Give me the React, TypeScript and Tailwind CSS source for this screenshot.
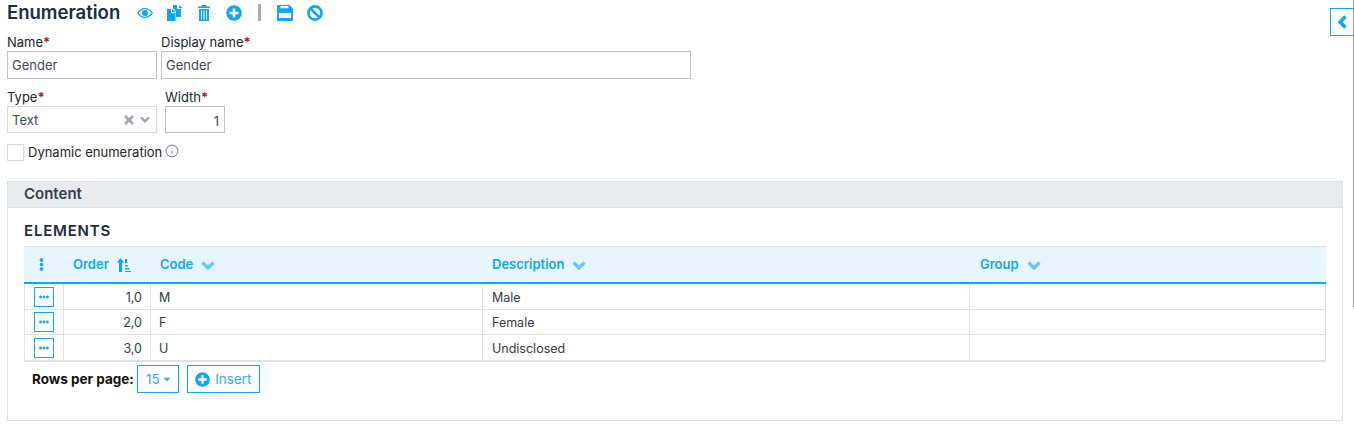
import { FaEllipsisH, FaEllipsisV, FaPlusCircle, FaCaretDown } from "react-icons/fa";
import { FiInfo } from "react-icons/fi";

const rows = [
  { order: "1,0", code: "M", description: "Male", h: "h-[26px]" },
  { order: "2,0", code: "F", description: "Female", h: "h-[25px]" },
  { order: "3,0", code: "U", description: "Undisclosed", h: "h-[26px]" },
];

const Chevron = ({ className }: { className: string }) => (
  <svg viewBox="0 0 14 9" className={className} fill="none" stroke="currentColor" strokeWidth="3.4">
    <path d="M1.500 1.500 7 7l5.500-5.500" />
  </svg>
);

const EyeIcon = () => (
  <svg viewBox="0 0 16 12" className="h-[12px] w-[16px]" fill="currentColor">
    <path d="M8 1C4.600 1 1.800 3 0 6c1.800 3 4.600 5 8 5s6.200-2 8-5c-1.800-3-4.600-5-8-5Zm0 1.200c2.600 0 4.900 1.400 6.500 3.800C12.900 8.400 10.600 9.800 8 9.800S3.100 8.400 1.500 6C3.100 3.600 5.400 2.200 8 2.200Z" />
    <path d="M8 3a3 3 0 1 0 0 6 3 3 0 0 0 0-6Z" />
  </svg>
);

const CopyIcon = () => (
  <svg viewBox="0 0 16 16" className="h-[16px] w-[16px]" fill="currentColor">
    <path d="M6 0h4v4h4v8H9V6.500L6 3.500Z" />
    <path d="M11 0l3.500 3H11Z" transform="translate(1 0)" />
    <path d="M0 4h4v4h4.500v8H0Z" />
    <path d="M5 4l3.500 3H5Z" />
  </svg>
);

const TrashIcon = () => (
  <svg viewBox="0 0 12 16" className="h-[16px] w-[12px]" fill="currentColor" fillRule="evenodd">
    <path d="M4 0h4l.7 1.500H12V3H0V1.500h3.300Z" />
    <path d="M1 4h10v12H1ZM3 5.500v9h1v-9Zm2.500 0v9h1v-9Zm2.500 0v9h1v-9Z" />
  </svg>
);

const SaveIcon = () => (
  <svg viewBox="0 0 16 16" className="h-[16px] w-[16px]" fill="currentColor" fillRule="evenodd">
    <path d="M1 0h11.500L16 3.500V15a1 1 0 0 1-1 1H1a1 1 0 0 1-1-1V1a1 1 0 0 1 1-1Zm2.500 1v2.300h8V1ZM2 8v5h12V8Z" />
  </svg>
);

const BanIcon = () => (
  <svg viewBox="0 0 16 16" className="h-[16px] w-[16px]" fill="none" stroke="currentColor" strokeWidth="2.6">
    <circle cx="8" cy="8" r="6.600" />
    <path d="M3.500 3.500l9 9" />
  </svg>
);

const SortIcon = () => (
  <svg viewBox="0 0 14 14" className="h-[14px] w-[14px]" fill="currentColor">
    <path d="M3.500 0 7 4.500H5V14H2V4.500H0Z" />
    <path d="M8 1h2.200v4H8Zm0 6h3v1.600H8Zm0 3h4.500v1.600H8Zm0 3h6v1.400H8Z" />
  </svg>
);

const Label = ({ text }: { text: string }) => (
  <div className="h-[18px] text-[13px] leading-[18px] text-[#212529]">
    {text}
    <span className="font-bold text-[#c1121f]">*</span>
  </div>
);

const HeaderCell = ({ text, className }: { text: string; className: string }) => (
  <div className={`flex items-center text-[13px] font-semibold text-[#0ea5fb] ${className}`}>
    {text}
    <Chevron className="ml-[8px] mt-[2px] h-[9px] w-[14px] text-[#6cc7fb]" />
  </div>
);

const App = () => {
  return (
    <div className="relative h-[427px] w-[1354px] overflow-hidden bg-white font-['Inter',sans-serif] text-[#212529]">
      <div className="absolute right-0 top-0 h-[307px] w-px bg-[#999]" />
      <button className="absolute right-px top-[8px] flex h-[28px] w-[23px] items-center justify-center border border-r-0 border-[#0ea5fb] bg-white text-[#0ea5fb]">
        <svg viewBox="0 0 10 14" className="h-[14px] w-[10px]" fill="none" stroke="currentColor" strokeWidth="3.4">
          <path d="M8.500 1.500 3 7l5.500 5.500" />
        </svg>
      </button>

      <div className="flex h-[25px] items-center pl-[7px]">
        <h1 className="w-[130px] text-[18.5px] font-semibold text-[#1c2b41]">Enumeration</h1>
        <div className="flex items-center text-[#0ea5fb]">
          <EyeIcon />
          <span className="ml-[14px]"><CopyIcon /></span>
          <span className="ml-[15px]"><TrashIcon /></span>
          <FaPlusCircle className="ml-[16px] w-[16px] text-[16px]" />
          <span className="ml-[16px] h-[17px] w-[3px] bg-[#a3afba]" />
          <span className="ml-[16px]"><SaveIcon /></span>
          <span className="ml-[14px]"><BanIcon /></span>
        </div>
      </div>

      <div className="mt-[8px] flex pl-[7px]">
        <div className="w-[150px]">
          <Label text="Name" />
          <input readOnly value="Gender" className="h-[28px] w-[150px] border border-[#b9c2ca] px-[4px] text-[13px] text-[#3b4a5c]" />
        </div>
        <div className="ml-[4px] w-[530px]">
          <Label text="Display name" />
          <input readOnly value="Gender" className="h-[28px] w-[530px] border border-[#b9c2ca] px-[4px] text-[13px] text-[#3b4a5c]" />
        </div>
      </div>

      <div className="mt-[9px] flex pl-[7px]">
        <div className="w-[150px]">
          <Label text="Type" />
          <div className="flex h-[27px] items-center border border-[#d5dce2] pl-[4px] pr-[6px] pt-[2px] text-[13px] text-[#3b4a5c]">
            <span className="flex-1">Text</span>
            <svg viewBox="0 0 10 10" className="mb-[2px] mr-[2px] h-[10px] w-[10px] text-[#9aa7b2]" fill="none" stroke="currentColor" strokeWidth="2.6">
              <path d="M1 1l8 8M9 1 1 9" />
            </svg>
            <Chevron className="mb-[2px] ml-[4px] h-[7px] w-[10px] text-[#9aa7b2]" />
          </div>
        </div>
        <div className="ml-[8px] w-[60px]">
          <Label text="Width" />
          <input readOnly value="1" className="h-[27px] w-[60px] border border-[#b9c2ca] pl-[4px] pr-[5px] pt-[2px] text-right text-[13px] text-[#3b4a5c]" />
        </div>
      </div>

      <div className="mt-[11px] flex h-[17px] items-center pl-[7px]">
        <span className="h-[17px] w-[17px] border border-[#d5dce2]" />
        <span className="ml-[4px] text-[13px] text-[#212529]">Dynamic enumeration</span>
        <FiInfo className="mb-[3px] ml-[3px] text-[14px] text-[#8b97a3]" />
      </div>

      <div className="ml-[7px] mt-[20px] h-[240px] w-[1336px] border border-[#dee2e6]">
        <div className="flex h-[26px] items-center border-b border-[#dee2e6] bg-[#e9ecef] pl-[16px] text-[15px] font-semibold text-[#343f4d]">
          Content
        </div>
        <div className="pl-[16px] pr-[16px]">
          <h2 className="mt-[14px] h-[17px] text-[15px] font-semibold leading-[17px] tracking-[0.8px] text-[#1c2b41]">ELEMENTS</h2>
          <div className="mt-[7px] flex h-[38px] items-center border-b-2 border-t border-b-[#0ea5fb] border-t-[#dee2e6] bg-[#e7f5fe]">
            <div className="flex w-[40px] justify-center pr-[6px] text-[13px] text-[#0ea5fb]"><FaEllipsisV /></div>
            <div className="flex w-[87px] items-center pl-[9px] text-[13px] font-semibold text-[#0ea5fb]">
              Order
              <span className="ml-[8px]"><SortIcon /></span>
            </div>
            <HeaderCell text="Code" className="w-[332px] pl-[9px]" />
            <HeaderCell text="Description" className="w-[487px] pl-[9px]" />
            <HeaderCell text="Group" className="flex-1 pl-[10px]" />
          </div>
          {rows.map((row) => (
            <div key={row.code} className={`flex border-b border-[#dee2e6] text-[12.5px] text-[#343a40] ${row.h}`}>
              <div className="flex w-[40px] items-center justify-center border-l border-r border-[#dee2e6]">
                <button className="flex h-[20px] w-[20px] items-center justify-center border border-[#0ea5fb] text-[10px] text-[#0ea5fb]">
                  <FaEllipsisH />
                </button>
              </div>
              <div className="flex w-[87px] items-center justify-end border-r border-[#dee2e6] pr-[8px] pt-[3px]">{row.order}</div>
              <div className="flex w-[332px] items-center border-r border-[#dee2e6] pl-[8px] pt-[3px]">{row.code}</div>
              <div className="flex w-[487px] items-center border-r border-[#dee2e6] pl-[9px] pt-[3px]">{row.description}</div>
              <div className="flex-1 border-r border-[#dee2e6]" />
            </div>
          ))}
          <div className="h-px bg-[#dee2e6]" />
          <div className="mt-[3px] flex items-center pl-[8px]">
            <span className="text-[13.5px] font-bold text-[#111]">Rows per page:</span>
            <button className="ml-[3px] flex h-[28px] w-[42px] items-center justify-center border border-[#0ea5fb] pl-[2px] text-[13.5px] text-[#35a9f0]">
              15
              <FaCaretDown className="ml-[2px] text-[10px]" />
            </button>
            <button className="ml-[8px] flex h-[28px] w-[73px] items-center justify-center border border-[#0ea5fb] text-[13.5px] text-[#35a9f0]">
              <FaPlusCircle className="mr-[5px] text-[15px] text-[#0ea5fb]" />
              Insert
            </button>
          </div>
        </div>
      </div>
    </div>
  );
};

export default App;
